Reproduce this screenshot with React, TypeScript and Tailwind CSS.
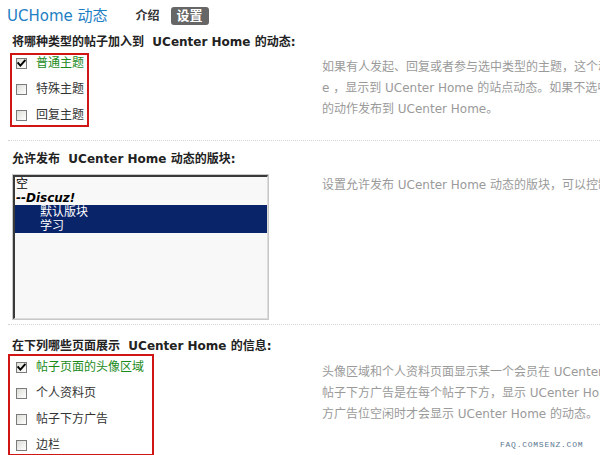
import React from "react";

const FONT = "font-['DejaVu_Sans','Noto_Sans_CJK_SC',sans-serif]";

function Check({ checked }: { checked?: boolean }) {
  return (
    <span className="relative flex h-[11px] w-[11px] shrink-0 items-center justify-center border border-[#7b7b7b] bg-[linear-gradient(135deg,#dcdcd7,#ffffff)]">
      {checked && (
        <svg width="9" height="9" viewBox="0 0 9 9" className="absolute left-[0px] top-[0px]">
          <path d="M1.2 4.2 L3.4 6.6 L7.8 1.6" fill="none" stroke="#000" strokeWidth="1.9" strokeLinecap="square" />
        </svg>
      )}
    </span>
  );
}

function Opt({ label, checked }: { label: string; checked?: boolean }) {
  return (
    <div className="flex h-[17px] items-center gap-[9px]">
      <Check checked={checked} />
      <span className={`text-[12px] leading-[17px] whitespace-nowrap ${checked ? "text-[#1a8a1a]" : "text-[#333]"}`}>{label}</span>
    </div>
  );
}

function Desc({ lines, className = "" }: { lines: string[]; className?: string }) {
  return (
    <div className={`min-w-0 flex-1 overflow-hidden text-[12px] leading-[21px] text-[#9a9a9a] ${className}`}>
      {lines.map((l, i) => (
        <div key={i} className="whitespace-nowrap">{l}</div>
      ))}
    </div>
  );
}

export default function App() {
  return (
    <div className={`relative h-[455px] w-[600px] overflow-hidden bg-white ${FONT}`}>
      {/* header */}
      <div className="flex h-[30px] items-center pl-[7px] pt-[2px]">
        <span className="text-[15px] leading-[20px] text-[#1e80c4]">UCHome 动态</span>
        <span className="ml-[28px] text-[12px] font-bold leading-[18px] text-[#333]">介绍</span>
        <span className="ml-[11px] flex h-[18px] items-center rounded-[3px] bg-[#666] px-[6px] text-[13px] font-bold text-white">设置</span>
      </div>

      {/* section 1 */}
      <div className="mt-[4px] pl-[12px] text-[12px] font-bold leading-[16px] text-[#222] whitespace-nowrap">将哪种类型的帖子加入到 &nbsp;UCenter Home 的动态:</div>
      <div className="mt-[3px] flex">
        <div className="ml-[10px] flex w-[79px] flex-col gap-[9px] border-2 border-[#d01515] pb-[1px] pl-[4px]">
          <Opt label="普通主题" checked />
          <Opt label="特殊主题" />
          <Opt label="回复主题" />
        </div>
        <Desc
          className="ml-[233px] mt-[4px]"
          lines={[
            "如果有人发起、回复或者参与选中类型的主题，这个动作将会被发布到 UCenter Hom",
            "e ，显示到 UCenter Home 的站点动态。如果不选中，则不会把这个类型",
            "的动作发布到 UCenter Home。",
          ]}
        />
      </div>

      <div className="ml-[8px] mt-[13px] border-t border-dotted border-[#d4d4d4]" />

      {/* section 2 */}
      <div className="mt-[10px] pl-[12px] text-[12px] font-bold leading-[16px] text-[#222] whitespace-nowrap">允许发布 &nbsp;UCenter Home 动态的版块:</div>
      <div className="mt-[7px] flex">
        <div className="ml-[12px] h-[146px] w-[257px] shrink-0 border border-[#c8c8c8]">
          <div className="h-full w-full border-l-2 border-t-2 border-[#3a3a3a] border-r border-b border-r-[#dcdcdc] border-b-[#dcdcdc] bg-[#f8f8f8] text-[12px] leading-[14px] text-black">
            <div className="h-[14px] pl-[1px]">空</div>
            <div className="h-[14px] pl-[1px] font-bold italic">--Discuz!</div>
            <div className="h-[14px] bg-[#0a246a] pl-[25px] text-white">默认版块</div>
            <div className="h-[14px] bg-[#0a246a] pl-[25px] text-white">学习</div>
          </div>
        </div>
        <Desc
          className="ml-[53px] mt-[1px]"
          lines={["设置允许发布 UCenter Home 动态的版块，可以控制哪些版块中的帖子加入到动态中。"]}
        />
      </div>

      <div className="ml-[8px] mt-[4px] border-t border-dotted border-[#d4d4d4]" />

      {/* section 3 */}
      <div className="mt-[13px] pl-[12px] text-[12px] font-bold leading-[16px] text-[#222] whitespace-nowrap">在下列哪些页面展示 &nbsp;UCenter Home 的信息:</div>
      <div className="flex">
        <div className="ml-[8px] flex w-[146px] shrink-0 flex-col gap-[9px] border-2 border-[#d01515] pl-[6px] pt-[3px]">
          <Opt label="帖子页面的头像区域" checked />
          <Opt label="个人资料页" />
          <Opt label="帖子下方广告" />
          <Opt label="边栏" />
        </div>
        <Desc
          className="ml-[168px] mt-[8px] leading-[20.5px]"
          lines={[
            "头像区域和个人资料页面显示某一个会员在 UCenter Home 中的动态，",
            "帖子下方广告是在每个帖子下方，显示 UCenter Home 的动态，",
            "方广告位空闲时才会显示 UCenter Home 的动态。",
          ]}
        />
      </div>

      <div className="absolute left-[500px] top-[441px] font-['Liberation_Mono',monospace] text-[8px] leading-[8px] tracking-[0.75px] text-[#5a7892]">
        FAQ.COMSENZ.COM
      </div>
    </div>
  );
}
